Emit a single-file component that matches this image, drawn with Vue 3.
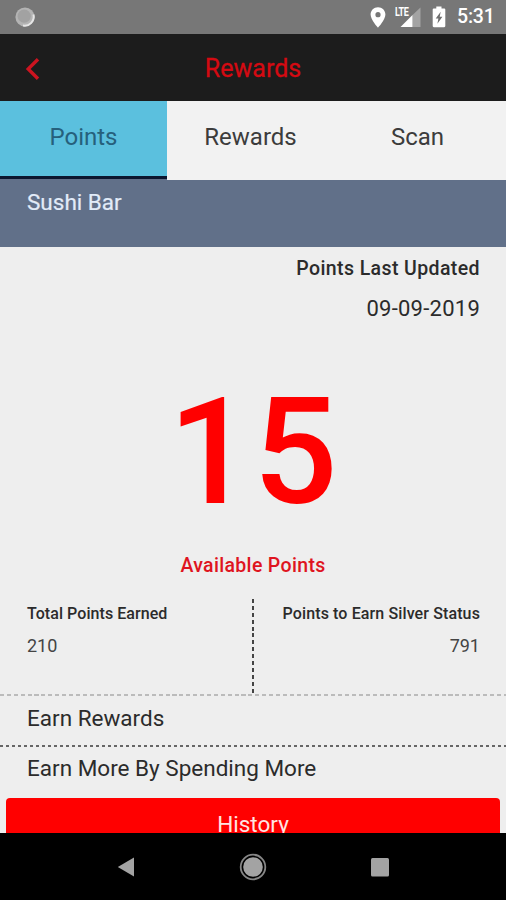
<template>
  <div class="phone">
    <div class="status-bar">
      <svg class="status-dot" width="22" height="22" viewBox="0 0 22 22">
        <circle cx="11" cy="11" r="9.6" fill="#b4b4b4" />
        <path d="M19.5 8.5A9.2 9.2 0 0 1 9 19.6" fill="none" stroke="#e6e6e6" stroke-width="2" />
        <circle cx="10.2" cy="10.2" r="6.6" fill="#a2a2a2" />
      </svg>
      <div class="status-icons">
        <svg class="icon-pin" width="16" height="21" viewBox="0 0 16 21">
          <path fill="#fff" fill-rule="evenodd" d="M8 .3C3.8.3.6 3.5.6 7.6.6 13 8 20.7 8 20.7S15.4 13 15.4 7.6C15.4 3.5 12.2.3 8 .3zM8 5.1a2.600 2.600 0 1 1 0 5.200 2.600 2.600 0 0 1 0-5.200z" />
        </svg>
        <div class="signal">
          <svg width="26" height="22" viewBox="0 0 26 22">
            <path d="M17.500 9L25.500 1.600V21h-8z" fill="#a3a3a3" />
            <path d="M17.500 9V21H5.500z" fill="#fff" />
          </svg>
          <span class="lte">LTE</span>
        </div>
        <svg class="icon-battery" width="14" height="22" viewBox="0 0 14 22">
          <path fill="#fff" d="M4.300.5h5.200v2h2.700q1.100 0 1.100 1.100v16.500q0 1.100-1.100 1.100H1.800q-1.100 0-1.100-1.100V3.600q0-1.100 1.100-1.100h2.500z" />
          <path fill="#6f6f6f" d="M8.700 5.800L3.700 12.600h2.700l-1 5.200 5-7H7.700z" />
        </svg>
        <span class="clock">5:31</span>
      </div>
    </div>

    <header class="app-header">
      <button class="btn-back" aria-label="Back">
        <svg width="16" height="22" viewBox="0 0 16 22">
          <path d="M13 1.300L3.200 11l9.800 9.700" fill="none" stroke="#cc1420" stroke-width="3.400" />
        </svg>
      </button>
      <h1>Rewards</h1>
    </header>

    <nav class="tabs">
      <button
        v-for="tab in tabs"
        :key="tab"
        class="tab"
        :class="{ active: tab === activeTab }"
        @click="activeTab = tab"
      >
        {{ tab }}
      </button>
    </nav>

    <div class="store">{{ account.store }}</div>

    <main class="content">
      <div class="updated">
        <div class="updated-label">Points Last Updated</div>
        <div class="updated-date">{{ account.lastUpdated }}</div>
      </div>

      <div class="points">{{ account.available }}</div>
      <div class="points-label">Available Points</div>

      <div class="stats">
        <div class="stat">
          <div class="stat-label">Total Points Earned</div>
          <div class="stat-value">{{ account.totalEarned }}</div>
        </div>
        <div class="stats-divider"></div>
        <div class="stat right">
          <div class="stat-label to-status">Points to Earn Silver Status</div>
          <div class="stat-value">{{ account.toNextStatus }}</div>
        </div>
      </div>

      <div class="line light"></div>
      <div class="row">Earn Rewards</div>
      <div class="line dark"></div>
      <div class="row more">Earn More By Spending More</div>

      <button class="btn-history">History</button>
    </main>

    <div class="nav-bar">
      <svg width="18" height="20" viewBox="0 0 18 20">
        <path d="M17 .5v19L.8 10z" fill="#a3a3a3" />
      </svg>
      <svg width="28" height="28" viewBox="0 0 28 28">
        <circle cx="14" cy="14" r="12.300" fill="none" stroke="#868686" stroke-width="1.800" />
        <circle cx="14" cy="14" r="9.800" fill="#a3a3a3" />
      </svg>
      <svg width="18" height="20" viewBox="0 0 18 20">
        <rect x="0" y="1" width="18" height="18.500" rx="1.500" fill="#a3a3a3" />
      </svg>
    </div>
  </div>
</template>

<script setup>
import { ref } from 'vue'

const tabs = ['Points', 'Rewards', 'Scan']
const activeTab = ref('Points')

const account = ref({
  store: 'Sushi Bar',
  lastUpdated: '09-09-2019',
  available: 15,
  totalEarned: 210,
  toNextStatus: 791
})
</script>

<style>
body { margin: 0; background: #000; }
</style>

<style scoped>
.phone { width: 506px; height: 900px; display: flex; flex-direction: column; overflow: hidden; background: #eee; color: #2b2b2b; font-family: Roboto, sans-serif; }
.phone * { box-sizing: border-box; }
button { border: none; padding: 0; background: none; font-family: inherit; cursor: pointer; }
svg { display: block; }

.status-bar { flex: none; height: 34px; display: flex; justify-content: space-between; align-items: center; padding: 0 11px 0 14px; background: #777; }
.status-icons { display: flex; align-items: center; color: #fff; }
.icon-pin { margin-right: 9px; }
.signal { position: relative; margin-right: 11px; }
.lte { position: absolute; left: 0; top: 0; font-size: 12px; line-height: 12px; font-weight: 700; letter-spacing: -0.5px; transform: scaleX(0.75); transform-origin: left; }
.icon-battery { margin-right: 11px; }
.clock { width: 38px; font-size: 19.500px; line-height: 24px; font-weight: 500; letter-spacing: -0.2px; white-space: nowrap; }

.app-header { flex: none; height: 67px; display: grid; grid-template-columns: 60px 1fr 60px; align-items: center; padding-top: 2px; background: #1c1c1c; }
.btn-back { padding-left: 25px; }
.app-header h1 { margin: 0; font-size: 25px; line-height: 30px; font-weight: 400; text-align: center; color: #d40a12; -webkit-text-stroke: 0.3px #d40a12; }

.tabs { flex: none; height: 79px; display: grid; grid-template-columns: 167px 167px 172px; background: linear-gradient(#617089, #617089) left bottom / 167px 4px no-repeat #f2f2f2; }
.tab { height: 79px; padding-bottom: 7px; font-size: 24px; line-height: 28px; color: #3c3c3c; }
.tab:last-child { padding-right: 5px; }
.tab.active { height: 78px; padding-bottom: 3px; border-bottom: 3px solid #0b1730; background: #5bc0de; color: #26607c; }

.store { flex: none; height: 67px; padding: 7px 27px; background: #617089; font-size: 22.500px; line-height: 30px; color: #e2ebf8; -webkit-text-stroke: 0.2px #e2ebf8; }

.content { flex: 1; min-height: 0; overflow: hidden; display: flex; flex-direction: column; }
.updated { flex: none; padding: 7px 26px 0; text-align: right; }
.updated-label { font-size: 19.500px; line-height: 30px; font-weight: 500; letter-spacing: 0.4px; }
.updated-date { margin-top: 10px; font-size: 22px; line-height: 30px; letter-spacing: 0.25px; }
.points { flex: none; margin-top: 48px; font-size: 149px; line-height: 160px; font-weight: 500; text-align: center; color: #f00; }
.points-label { flex: none; margin-top: 22px; font-size: 19.500px; line-height: 24px; font-weight: 500; letter-spacing: 0.33px; text-align: center; color: #df1420; }

.stats { flex: none; height: 94px; display: grid; grid-template-columns: 252px 2px 252px; margin-top: 21px; }
.stat { padding: 5px 0 0 27px; }
.stat.right { padding: 5px 26px 0 0; text-align: right; }
.stat-label { font-size: 16px; line-height: 20px; font-weight: 500; letter-spacing: 0.06px; white-space: nowrap; }
.stat-label.to-status { letter-spacing: 0.12px; }
.stat-value { margin-top: 10px; font-size: 18px; line-height: 24px; color: #444; }
.stats-divider { background: repeating-linear-gradient(to bottom, #444 0 4px, transparent 4px 6.900px); }

.line { flex: none; height: 2px; }
.line.light { margin-top: 1px; background: repeating-linear-gradient(to right, #bbb 0 4px, transparent 4px 6.900px); }
.line.dark { background: repeating-linear-gradient(to right, #666 0 3.500px, transparent 3.500px 6px); }
.row { flex: none; height: 49px; padding: 7px 27px; font-size: 22.500px; line-height: 30px; }
.row.more { height: 51px; padding-top: 6px; }
.btn-history { flex: none; height: 52px; margin: 0 6px; border-radius: 4px; background: #f00; color: #ffe4e2; font-size: 22.500px; line-height: 30px; }

.nav-bar { flex: none; height: 67px; display: flex; justify-content: center; align-items: center; gap: 104px; background: #000; }
</style>
